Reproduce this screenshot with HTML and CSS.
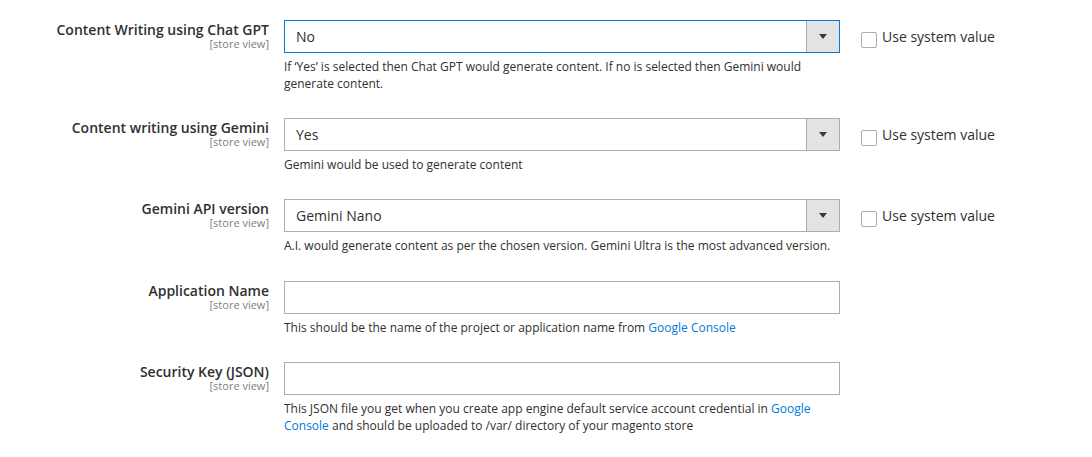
FILE: index.html
```html
<!DOCTYPE html>
<html lang="en">
<head>
<meta charset="utf-8">
<title>Config</title>
<link rel="stylesheet" href="styles.css">
</head>
<body>
<div class="form">
  <div class="row">
    <div class="label-col">
      <div class="label">Content Writing using Chat GPT</div>
      <div class="scope">[store view]</div>
    </div>
    <div class="control">
      <div class="select focus"><span class="value">No</span><span class="arrow"><span class="tri"></span></span></div>
      <div class="note">If ‘Yes’ is selected then Chat GPT would generate content. If no is selected then Gemini would generate content.</div>
    </div>
    <div class="system"><span class="check"></span><span>Use system value</span></div>
  </div>
  <div class="row">
    <div class="label-col">
      <div class="label">Content writing using Gemini</div>
      <div class="scope">[store view]</div>
    </div>
    <div class="control">
      <div class="select"><span class="value">Yes</span><span class="arrow"><span class="tri"></span></span></div>
      <div class="note">Gemini would be used to generate content</div>
    </div>
    <div class="system"><span class="check"></span><span>Use system value</span></div>
  </div>
  <div class="row">
    <div class="label-col">
      <div class="label">Gemini API version</div>
      <div class="scope">[store view]</div>
    </div>
    <div class="control">
      <div class="select"><span class="value">Gemini Nano</span><span class="arrow"><span class="tri"></span></span></div>
      <div class="note">A.I. would generate content as per the chosen version. Gemini Ultra is the most advanced version.</div>
    </div>
    <div class="system"><span class="check"></span><span>Use system value</span></div>
  </div>
  <div class="row">
    <div class="label-col">
      <div class="label">Application Name</div>
      <div class="scope">[store view]</div>
    </div>
    <div class="control">
      <div class="input"></div>
      <div class="note">This should be the name of the project or application name from <a href="#">Google Console</a></div>
    </div>
    <div></div>
  </div>
  <div class="row">
    <div class="label-col">
      <div class="label">Security Key (JSON)</div>
      <div class="scope">[store view]</div>
    </div>
    <div class="control">
      <div class="input"></div>
      <div class="note">This JSON file you get when you create app engine default service account credential in <a href="#">Google Console</a> and should be uploaded to /var/ directory of your magento store</div>
    </div>
    <div></div>
  </div>
</div>
</body>
</html>
```
FILE: styles.css
```css
html, body {
  margin: 0;
  padding: 0;
  background: #ffffff;
}
body {
  font-family: "Open Sans", "Liberation Sans", sans-serif;
  color: #303030;
}
.form {
  padding-top: 20px;
}
.row {
  display: grid;
  grid-template-columns: 269px 556px auto;
  column-gap: 15px;
  padding-bottom: 25.53px;
}
.row > .system {
  margin-left: 6px;
}
.label-col {
  text-align: right;
}
.label {
  font-size: 14px;
  font-weight: 600;
  line-height: 16px;
  padding-top: 2px;
}
.scope {
  font-size: 11px;
  line-height: 11px;
  color: #808080;
}
.select, .input {
  box-sizing: border-box;
  height: 33px;
  border: 1px solid #adadad;
  background: #fff;
  display: flex;
  align-items: stretch;
}
.select.focus {
  border-color: #007bdb;
}
.value {
  flex: 1;
  font-size: 14px;
  line-height: 31px;
  padding-left: 11px;
}
.arrow {
  width: 32px;
  background: #e3e3e3;
  border-left: 1px solid #adadad;
  display: flex;
  align-items: center;
  justify-content: center;
}
.tri {
  width: 0;
  height: 0;
  border-left: 4px solid transparent;
  border-right: 4px solid transparent;
  border-top: 5px solid #41362f;
}
.note {
  font-size: 12px;
  line-height: 16.8px;
  margin-top: 6px;
}
.note a {
  color: #007bdb;
  text-decoration: none;
}
.system {
  display: flex;
  align-items: flex-start;
  padding-top: 8px;
  font-size: 14px;
  line-height: 18px;
}
.check {
  box-sizing: border-box;
  width: 16px;
  height: 16px;
  border: 1px solid #adadad;
  border-radius: 2px;
  margin-top: 4px;
  margin-right: 5px;
  background: #fff;
}
```
